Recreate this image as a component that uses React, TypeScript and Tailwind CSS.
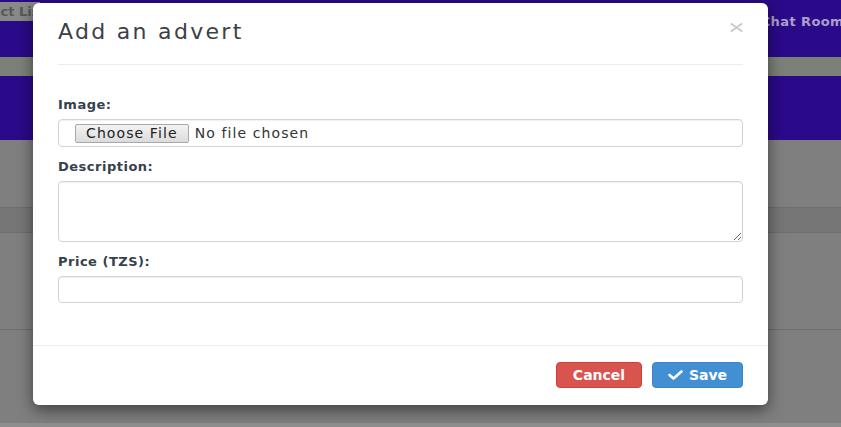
import React from "react";

const font = "font-['DejaVu_Sans',sans-serif]";

export default function App() {
  return (
    <div className={`relative h-[427px] w-[841px] overflow-hidden bg-[#7f7f7f] ${font}`}>
      {/* page behind backdrop */}
      <div className="flex h-full flex-col">
        <div className="flex h-[57px] items-start bg-[#2a0a88]">
          <div className="mt-[2px] flex h-[19px] w-[40px] items-center overflow-hidden bg-[#878a86]">
            <span className="-ml-[43px] whitespace-nowrap text-[13px] font-bold text-[#55585a]">Product List</span>
          </div>
          <div className="flex-1" />
          <span className="-mr-[3px] mt-[12px] whitespace-nowrap text-[13px] font-bold tracking-[0.4px] text-[#ad9fcb]">Chat Room</span>
        </div>
        <div className="h-[19px] bg-[#7b8178]" />
        <div className="h-[64px] bg-[#2a0a88]" />
        <div className="h-[67px] bg-[#7f7f7f]" />
        <div className="h-[26px] border-y border-[#6d6d6d] bg-[#767676]" />
        <div className="h-[97px] border-b border-[#6f6f6f] bg-[#7f7f7f]" />
        <div className="flex-1 bg-[#7f7f7f]" />
        <div className="h-[4px] bg-[#8e8e8e]" />
      </div>

      {/* modal */}
      <div className="absolute left-[33px] top-[3px] flex h-[402px] w-[735px] flex-col rounded-[6px] bg-white shadow-[0_5px_15px_rgba(0,0,0,0.5)]">
        <div className="relative mx-[25px] h-[62px] border-b border-[#ececec] pt-[17px]">
          <h4 className="text-[22px] leading-[24px] tracking-[2.3px] text-[#3b4147]">Add an advert</h4>
          <svg className="absolute right-0 top-[20px]" width="13" height="9" viewBox="0 0 13 9">
            <path d="M1.5 1 L11.5 8 M11.5 1 L1.5 8" stroke="#c9c9c9" strokeWidth="2" strokeLinecap="round" />
          </svg>
        </div>

        <div className="flex flex-1 flex-col px-[25px] pt-[32px]">
          <label className="mb-[6px] block h-[16px] text-[13px] font-bold leading-[16px] tracking-[0.5px] text-[#35414c]">Image:</label>
          <div className="flex h-[28px] items-center rounded-[4px] border border-[#d3d3d3] pl-[16px] shadow-[inset_0_1px_1px_rgba(0,0,0,0.06)]">
            <span className="flex h-[19px] items-center rounded-[2px] border border-[#a8a8a8] bg-gradient-to-b from-[#f3f3f3] to-[#dcdcdc] px-[10px] text-[14px] tracking-[1.1px] text-[#222]">
              Choose File
            </span>
            <span className="ml-[6px] text-[14px] tracking-[1.1px] text-[#333]">No file chosen</span>
          </div>

          <label className="mb-[6px] mt-[12px] block h-[16px] text-[13px] font-bold leading-[16px] tracking-[0.5px] text-[#35414c]">Description:</label>
          <textarea className="block h-[61px] w-full rounded-[4px] border border-[#d3d3d3] shadow-[inset_0_1px_1px_rgba(0,0,0,0.06)] outline-none" />

          <label className="mb-[6px] mt-[12px] block h-[16px] text-[13px] font-bold leading-[16px] tracking-[0.5px] text-[#35414c]">Price (TZS):</label>
          <input type="text" className="block h-[27px] w-full rounded-[4px] border border-[#d3d3d3] shadow-[inset_0_1px_1px_rgba(0,0,0,0.06)] outline-none" />
        </div>

        <div className="flex h-[60px] justify-end gap-[10px] border-t border-[#ececec] px-[25px] pt-[16px]">
          <button className="flex h-[26px] w-[86px] items-center justify-center rounded-[4px] border border-[#d43f3a] bg-[#d9534f] text-[14px] font-bold text-white">
            Cancel
          </button>
          <button className="flex h-[26px] w-[91px] items-center justify-center gap-[6px] rounded-[4px] border border-[#3a85c9] bg-[#4290d3] text-[14px] font-bold text-white">
            <svg width="15" height="10" viewBox="0 0 15 10">
              <path d="M1.5 5 L5.5 8.5 L13.5 1.5" stroke="#fff" strokeWidth="2.6" fill="none" strokeLinecap="round" strokeLinejoin="round" />
            </svg>
            Save
          </button>
        </div>
      </div>
    </div>
  );
}
